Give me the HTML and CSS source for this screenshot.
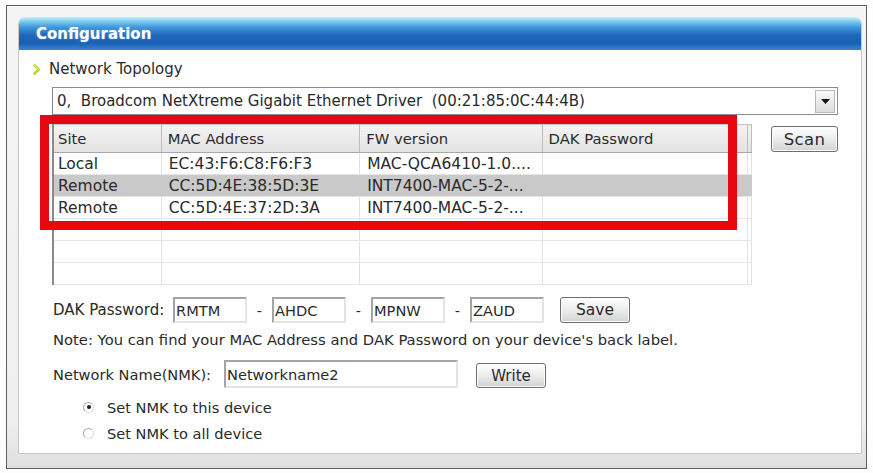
FILE: index.html
```html
<!DOCTYPE html>
<html>
<head>
<meta charset="utf-8">
<link rel="stylesheet" href="styles.css">
</head>
<body>
<div class="cut"></div>
<div class="window">
  <div class="panel">
    <div class="header"><span class="title">Configuration</span></div>
    <div class="content">
      <div class="topo">
        <svg class="topo-icon" width="8" height="11" viewBox="0 0 8 11"><path d="M1.5 1.5 L6 5.5 L1.5 9.5" fill="none" stroke="#b8d33a" stroke-width="2.6" stroke-linecap="round" stroke-linejoin="round"/><path d="M1.5 1.5 L6 5.5" fill="none" stroke="#e6e04a" stroke-width="1.2" stroke-linecap="round"/></svg>
        <span>Network Topology</span>
      </div>
      <div class="select">
        <span class="sel-text">0,  Broadcom NetXtreme Gigabit Ethernet Driver  (00:21:85:0C:44:4B)</span>
        <span class="sel-btn"><svg width="9" height="5" viewBox="0 0 9 5"><path d="M0 0 H9 L4.5 5 Z" fill="#111"/></svg></span>
      </div>
      <div class="table-row">
        <div class="table-wrap">
          <table class="grid">
            <colgroup><col class="c1"><col class="c2"><col class="c3"><col class="c4"><col class="c5"></colgroup>
            <thead>
              <tr><th>Site</th><th>MAC Address</th><th>FW version</th><th>DAK Password</th><th></th></tr>
            </thead>
            <tbody>
              <tr><td>Local</td><td>EC:43:F6:C8:F6:F3</td><td>MAC-QCA6410-1.0....</td><td></td><td></td></tr>
              <tr class="sel"><td>Remote</td><td>CC:5D:4E:38:5D:3E</td><td>INT7400-MAC-5-2-...</td><td></td><td></td></tr>
              <tr><td>Remote</td><td>CC:5D:4E:37:2D:3A</td><td>INT7400-MAC-5-2-...</td><td></td><td></td></tr>
              <tr><td></td><td></td><td></td><td></td><td></td></tr>
              <tr><td></td><td></td><td></td><td></td><td></td></tr>
              <tr><td></td><td></td><td></td><td></td><td></td></tr>
            </tbody>
          </table>
          <div class="redbox"></div>
        </div>
        <button class="btn scan">Scan</button>
      </div>
      <div class="dak">
        <span class="lbl dak-lbl">DAK Password:</span>
        <span class="field key">RMTM</span><span class="dash">-</span>
        <span class="field key">AHDC</span><span class="dash">-</span>
        <span class="field key">MPNW</span><span class="dash">-</span>
        <span class="field key">ZAUD</span>
        <button class="btn save">Save</button>
      </div>
      <div class="note">Note: You can find your MAC Address and DAK Password on your device's back label.</div>
      <div class="nmk">
        <span class="lbl nmk-lbl">Network Name(NMK):</span>
        <span class="field name">Networkname2</span>
        <button class="btn write">Write</button>
      </div>
      <div class="radio first"><span class="dot on"></span><span>Set NMK to this device</span></div>
      <div class="radio"><span class="dot"></span><span>Set NMK to all device</span></div>
    </div>
  </div>
</div>
</body>
</html>
```

FILE: styles.css
```css
* { box-sizing: border-box; }
html, body { margin: 0; padding: 0; background: #fdfdfd; }
body {
  font-family: "DejaVu Sans", Tahoma, sans-serif;
  font-size: 14.6px;
  color: #2a2a2a;
  width: 873px;
  height: 473px;
  overflow: hidden;
}
.cut {
  height: 5px;
}
.window {
  margin-left: 6px;
  width: 861px;
  border: 1px solid #5e5e5e;
  background: linear-gradient(to bottom, #f4f4f4, #efefef 90%, #dedede);
  padding: 11px 4px 14px 11px;
}
.panel {
  background: #fff;
  border: 1px solid #c6c6c6;
  border-top: none;
  border-radius: 7px 7px 0 0;
}
.header {
  height: 33px;
  border-radius: 7px 7px 0 0;
  background: linear-gradient(to bottom, #c8eefa 0%, #84d0f0 12%, #4299dc 30%, #1f67bb 55%, #1a60b6 80%, #3a86cf 100%);
  display: flex;
  align-items: center;
  padding-left: 17px;
}
.title {
  color: #fff;
  font-weight: bold;
  font-size: 15px;
  text-shadow: 0 0 2px rgba(150,200,240,0.7);
}
.content {
  padding: 10px 23px 11px 33px;
}
.topo {
  height: 18px;
  display: flex;
  align-items: center;
  margin-left: -19px;
  font-size: 15px;
}
.topo-icon { margin-right: 8px; }
.select {
  margin-top: 9px;
  height: 28px;
  border: 1px solid #8c8c8c;
  display: flex;
  align-items: center;
  justify-content: space-between;
  padding: 0 2px 0 4px;
  font-size: 15px;
}
.sel-text { white-space: pre; }
.sel-btn {
  width: 20px;
  height: 23px;
  border: 1px solid #b8b8b8;
  background: linear-gradient(to bottom, #fafafa, #dcdcdc);
  display: flex;
  align-items: center;
  justify-content: center;
}
.table-row {
  margin-top: 9px;
  display: flex;
  justify-content: space-between;
  align-items: flex-start;
}
.table-wrap {
  position: relative;
  width: 700px;
}
.grid {
  width: 700px;
  table-layout: fixed;
  border-collapse: collapse;
  border-left: 2px solid #8a8a8a;
  border-right: 1px solid #d4d4d4;
  border-bottom: 1px solid #cfcfcf;
}
.c1 { width: 108px; }
.c2 { width: 198px; }
.c3 { width: 182px; }
.c4 { width: 205px; }
.c5 { width: 4px; }
.grid th {
  height: 28px;
  text-align: left;
  font-weight: normal;
  font-size: 14.8px;
  padding: 0 0 0 6px;
  background: linear-gradient(to bottom, #f3f3f3, #e2e2e2);
  border-right: 1px solid #bdbdbd;
  border-bottom: 1px solid #a8a8a8;
  border-top: 1px solid #c8c8c8;
  white-space: nowrap;
}
.grid th:first-child { padding-left: 4px; }
.grid td {
  height: 22px;
  padding: 0 0 0 7px;
  font-size: 15.5px;
  border-right: 1px solid #e2e2e2;
  border-bottom: 1px solid #e6e6e6;
  white-space: nowrap;
  overflow: hidden;
}
.grid td:first-child { padding-left: 4px; }
.grid tr.sel td { background: #c9c9c9; border-right-color: #c9c9c9; }
.redbox {
  position: absolute;
  left: -12px;
  top: -9px;
  width: 697px;
  height: 115px;
  border: 9px solid #e5080f;
}
.btn {
  font-family: inherit;
  font-size: 15.5px;
  color: #2a2a2a;
  border: 1px solid #6f6f6f;
  border-radius: 3px;
  background: linear-gradient(to bottom, #ffffff, #ececec 50%, #d2d2d2);
  box-shadow: inset 0 0 0 1px #fbfbfb;
  padding: 0;
  height: 26px;
}
.scan { width: 67px; margin-top: 2px; font-size: 16.5px; letter-spacing: 0.4px; }
.dak {
  margin-top: 12px;
  height: 26px;
  display: flex;
  align-items: center;
}
.lbl { padding-left: 1px; }
.dak-lbl { width: 121px; font-size: 15px; }
.field {
  height: 26px;
  border: 2px solid #a4a4a4;
  border-right-color: #e4e4e4;
  border-bottom-color: #e4e4e4;
  display: flex;
  align-items: center;
  padding-left: 1px;
}
.key { width: 74px; }
.dash { width: 25px; text-align: center; }
.save { width: 70px; margin-left: 16px; }
.note {
  margin-top: 8px;
  height: 18px;
  line-height: 18px;
  padding-left: 1px;
  white-space: nowrap;
  font-size: 14.75px;
}
.nmk {
  margin-top: 11px;
  height: 28px;
  display: flex;
  align-items: center;
}
.nmk-lbl { width: 172px; }
.name { width: 234px; height: 28px; }
.write { width: 70px; margin-left: 18px; height: 25px; margin-top: 3px; font-size: 15px; }
.radio {
  height: 18px;
  display: flex;
  align-items: center;
  padding-left: 31px;
  margin-top: 8px;
}
.radio.first { margin-top: 10px; }
.dot {
  width: 11px;
  height: 11px;
  border-radius: 50%;
  border: 1px solid #a8a8a8;
  border-right-color: #e0e0e0;
  border-bottom-color: #e0e0e0;
  background: #fff;
  margin-right: 13px;
  display: flex;
  align-items: center;
  justify-content: center;
}
.dot.on::after {
  content: "";
  width: 4px;
  height: 4px;
  border-radius: 50%;
  background: #222;
}
```
